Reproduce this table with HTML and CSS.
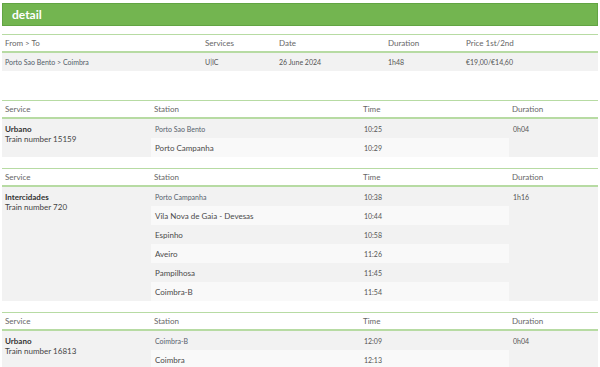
FILE: index.html
```html
<!DOCTYPE html>
<html>
<head>
<meta charset="utf-8">
<link rel="stylesheet" href="styles.css">
</head>
<body>
<div class="page">
  <div class="title">detail</div>

  <table class="summary">
    <colgroup><col style="width:200px"><col style="width:74px"><col style="width:109px"><col style="width:78px"><col></colgroup>
    <thead>
      <tr><th>From &gt; To</th><th>Services</th><th>Date</th><th>Duration</th><th>Price 1st/2nd</th></tr>
    </thead>
    <tbody>
      <tr><td class="route">Porto Sao Bento &gt; Coimbra</td><td>U|IC</td><td>26 June 2024</td><td>1h48</td><td>€19,00/€14,60</td></tr>
    </tbody>
  </table>

  <table class="leg">
    <colgroup><col style="width:149px"><col style="width:209px"><col style="width:149px"><col></colgroup>
    <thead><tr><th>Service</th><th>Station</th><th>Time</th><th>Duration</th></tr></thead>
    <tbody>
      <tr class="odd"><td class="svc" rowspan="2"><b>Urbano</b><br>Train number 15159</td><td class="st first">Porto Sao Bento</td><td class="tm">10:25</td><td class="dur" rowspan="2">0h04</td></tr>
      <tr class="even"><td class="st">Porto Campanha</td><td class="tm">10:29</td></tr>
    </tbody>
  </table>

  <table class="leg">
    <colgroup><col style="width:149px"><col style="width:209px"><col style="width:149px"><col></colgroup>
    <thead><tr><th>Service</th><th>Station</th><th>Time</th><th>Duration</th></tr></thead>
    <tbody>
      <tr class="odd"><td class="svc" rowspan="6"><b>Intercidades</b><br>Train number 720</td><td class="st first">Porto Campanha</td><td class="tm">10:38</td><td class="dur" rowspan="6">1h16</td></tr>
      <tr class="even"><td class="st">Vila Nova de Gaia - Devesas</td><td class="tm">10:44</td></tr>
      <tr class="odd"><td class="st">Espinho</td><td class="tm">10:58</td></tr>
      <tr class="even"><td class="st">Aveiro</td><td class="tm">11:26</td></tr>
      <tr class="odd"><td class="st">Pampilhosa</td><td class="tm">11:45</td></tr>
      <tr class="even"><td class="st">Coimbra-B</td><td class="tm">11:54</td></tr>
    </tbody>
  </table>

  <table class="leg">
    <colgroup><col style="width:149px"><col style="width:209px"><col style="width:149px"><col></colgroup>
    <thead><tr><th>Service</th><th>Station</th><th>Time</th><th>Duration</th></tr></thead>
    <tbody>
      <tr class="odd"><td class="svc" rowspan="2"><b>Urbano</b><br>Train number 16813</td><td class="st first">Coimbra-B</td><td class="tm">12:09</td><td class="dur" rowspan="2">0h04</td></tr>
      <tr class="even"><td class="st">Coimbra</td><td class="tm">12:13</td></tr>
    </tbody>
  </table>
</div>
</body>
</html>
```

FILE: styles.css
```css
html, body {
  margin: 0;
  padding: 0;
  background: #ffffff;
}
body {
  font-family: Lato, "Noto Sans", sans-serif;
  color: #555555;
}
.page {
  padding: 3px 2px 0 2px;
}
.title {
  background: #73b550;
  border: 1px solid #62a443;
  color: #ffffff;
  font-weight: bold;
  font-size: 12px;
  height: 21px;
  line-height: 21px;
  padding-left: 9px;
}
table {
  width: 596px;
  border-collapse: collapse;
  table-layout: fixed;
}
th {
  text-align: left;
  font-weight: normal;
  font-size: 8px;
  color: #666666;
  height: 16px;
  padding: 0 3px;
  border-top: 1px solid #b7dba3;
  border-bottom: 2px solid #b7dba3;
  background: #ffffff;
}
.summary {
  margin-top: 8px;
}
.summary td {
  background: #f2f2f2;
  font-size: 7px;
  height: 18px;
  padding: 0 3px;
  color: #555555;
}
.summary td.route {
  color: #525c68;
}
.leg {
  margin-top: 29px;
}
.leg + .leg {
  margin-top: 11px;
}
.leg td {
  height: 19px;
  padding: 0 4px;
  font-size: 8px;
  color: #555555;
}
.leg tr.odd td { background: #f2f2f2; }
.leg tr.even td { background: #f9f9f9; }
.leg td.svc, .leg td.dur {
  background: #f2f2f2;
  vertical-align: top;
  padding-top: 5px;
  line-height: 10px;
}
.leg td.svc {
  color: #444444;
  padding-left: 3px;
}
.leg td.svc b {
  color: #333333;
}
.leg td.dur {
  font-size: 7px;
}
.leg td.st {
  color: #4a4a4a;
}
.leg td.st.first {
  font-size: 7px;
  color: #56606c;
}
.leg td.tm {
  font-size: 7px;
}
```
